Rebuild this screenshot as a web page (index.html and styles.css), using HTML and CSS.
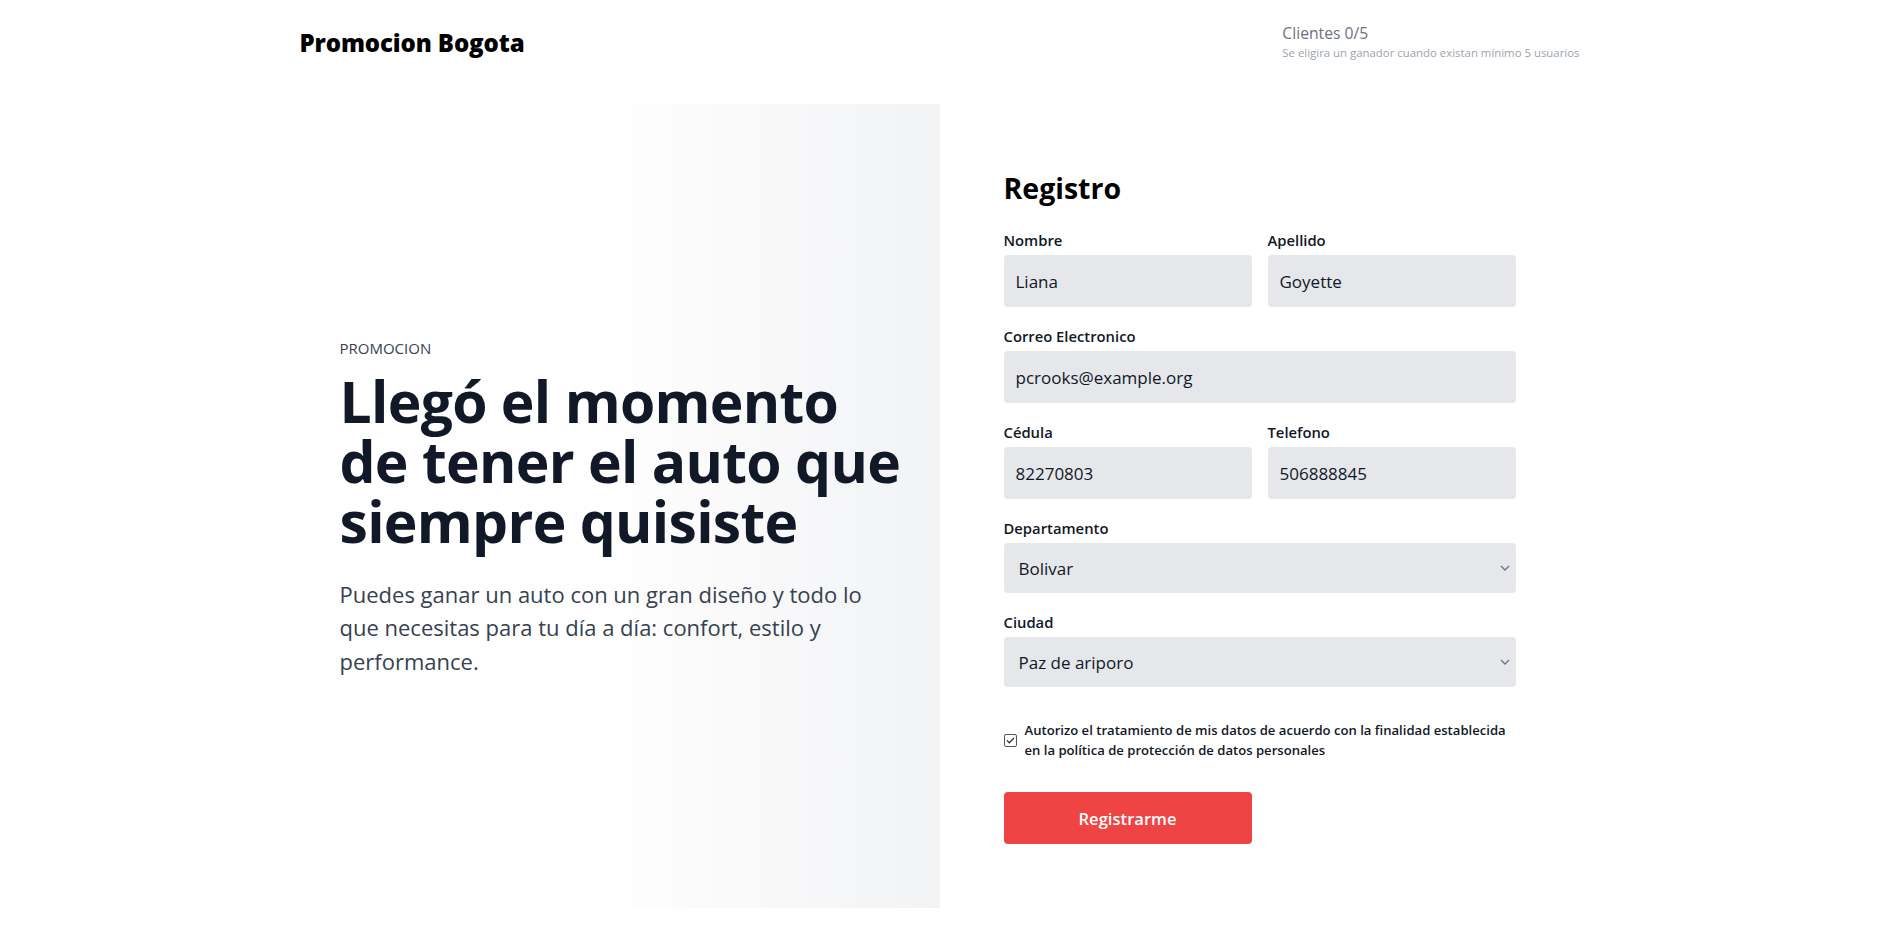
FILE: index.html
```html
<!DOCTYPE html>
<html lang="es">
<head>
<meta charset="utf-8">
<title>Promocion Bogota</title>
<link rel="stylesheet" href="styles.css">
</head>
<body>
<div class="page">
  <header class="header">
    <div class="brand">Promocion Bogota</div>
    <div class="counter">
      <div class="counter-title">Clientes 0/5</div>
      <div class="counter-sub">Se eligira un ganador cuando existan mínimo 5 usuarios</div>
    </div>
  </header>
  <main class="main">
    <section class="hero">
      <div class="hero-inner">
        <div class="eyebrow">PROMOCION</div>
        <h1 class="hero-title">Llegó el momento<br>de tener el auto que<br>siempre quisiste</h1>
        <p class="hero-text">Puedes ganar un auto con un gran diseño y todo lo que necesitas para tu día a día: confort, estilo y performance.</p>
      </div>
    </section>
    <section class="form-col">
      <h2 class="form-title">Registro</h2>
      <form class="form-grid">
        <div class="field">
          <label class="label">Nombre</label>
          <input class="input" type="text" value="Liana">
        </div>
        <div class="field">
          <label class="label">Apellido</label>
          <input class="input" type="text" value="Goyette">
        </div>
        <div class="field span2">
          <label class="label">Correo Electronico</label>
          <input class="input" type="text" value="pcrooks@example.org">
        </div>
        <div class="field">
          <label class="label">Cédula</label>
          <input class="input" type="text" value="82270803">
        </div>
        <div class="field">
          <label class="label">Telefono</label>
          <input class="input" type="text" value="506888845">
        </div>
        <div class="field span2">
          <label class="label">Departamento</label>
          <div class="select-wrap">
            <select class="select"><option>Bolivar</option></select>
            <svg class="chev" width="10" height="6" viewBox="0 0 10 6"><path d="M1 1l4 4 4-4" fill="none" stroke="#6b7280" stroke-width="1.3"/></svg>
          </div>
        </div>
        <div class="field span2">
          <label class="label">Ciudad</label>
          <div class="select-wrap">
            <select class="select"><option>Paz de ariporo</option></select>
            <svg class="chev" width="10" height="6" viewBox="0 0 10 6"><path d="M1 1l4 4 4-4" fill="none" stroke="#6b7280" stroke-width="1.3"/></svg>
          </div>
        </div>
        <div class="consent span2">
          <span class="check"><svg width="11" height="11" viewBox="0 0 11 11"><path d="M2 5.5l2.3 2.3L9 3" fill="none" stroke="#333" stroke-width="1.3"/></svg></span>
          <span class="consent-text">Autorizo el tratamiento de mis datos de acuerdo con la finalidad establecida en la política de protección de datos personales</span>
        </div>
        <div class="actions span2">
          <button class="btn" type="button">Registrarme</button>
        </div>
      </form>
    </section>
  </main>
</div>
</body>
</html>
```

FILE: styles.css
```css
* { box-sizing: border-box; }
html, body { margin: 0; padding: 0; background: #fff; }
body {
  font-family: "Open Sans", "Noto Sans", sans-serif;
  color: #111827;
}
.page {
  width: 1280px;
  margin: 0 auto;
}
.header {
  height: 84px;
  display: flex;
  justify-content: space-between;
  align-items: center;
}
.brand {
  font-size: 24px;
  font-weight: 800;
  color: #000;
  letter-spacing: -0.1px;
}
.counter { white-space: nowrap; }
.counter-title {
  font-size: 15.7px;
  line-height: 22px;
  color: #6b7280;
}
.counter-sub {
  font-size: 11.4px;
  line-height: 18px;
  color: #9ca3af;
}
.main {
  margin-top: 20px;
  display: grid;
  grid-template-columns: 640px 640px;
  height: 804px;
}
.hero {
  display: flex;
  align-items: center;
  padding-left: 40px;
  padding-top: 4px;
  background: linear-gradient(to right, #ffffff 333px, #fdfdfd 333px, #f2f3f5 100%);
}
.hero-inner { width: 580px; }
.eyebrow {
  font-size: 15px;
  line-height: 20px;
  color: #374151;
}
.hero-title {
  margin: 13px 0 0;
  font-size: 57px;
  line-height: 60px;
  font-weight: 700;
  color: #111827;
  letter-spacing: -0.7px;
}
.hero-text {
  margin: 27px 0 0;
  font-size: 22px;
  line-height: 33.5px;
  color: #374151;
  width: 560px;
}
.form-col {
  padding: 64px 64px;
}
.form-title {
  margin: 0 0 22px;
  font-size: 28.5px;
  line-height: 40px;
  font-weight: 700;
  color: #000;
}
.form-grid {
  display: grid;
  grid-template-columns: 1fr 1fr;
  column-gap: 16px;
  row-gap: 19px;
}
.span2 { grid-column: span 2; }
.field { display: flex; flex-direction: column; }
.label {
  font-size: 14.8px;
  line-height: 20px;
  font-weight: 600;
  color: #111827;
  margin-bottom: 5px;
}
.input, .select {
  height: 52px;
  border: none;
  border-radius: 4px;
  background: #e5e7eb;
  font-family: inherit;
  font-size: 17px;
  color: #111827;
  padding: 0 12px;
  outline: none;
  width: 100%;
}
.select-wrap { position: relative; }
.select {
  height: 50px;
  -webkit-appearance: none;
  appearance: none;
  padding: 0 15px;
}
.chev {
  position: absolute;
  right: 6px;
  top: 22px;
}
.consent {
  margin-top: 14px;
  display: flex;
  align-items: center;
  gap: 8px;
}
.check {
  flex: none;
  width: 13px;
  height: 13px;
  border: 1px solid #555;
  border-radius: 2px;
  background: #fff;
  display: flex;
  align-items: center;
  justify-content: center;
}
.consent-text {
  max-width: 486px;
  font-size: 13.1px;
  line-height: 20px;
  font-weight: 600;
  color: #111827;
}
.actions { margin-top: 13px; }
.btn {
  width: 248px;
  height: 52px;
  border: none;
  border-radius: 4px;
  background: #ef4444;
  color: #fff;
  font-family: inherit;
  font-size: 16.6px;
  font-weight: 600;
}
```
